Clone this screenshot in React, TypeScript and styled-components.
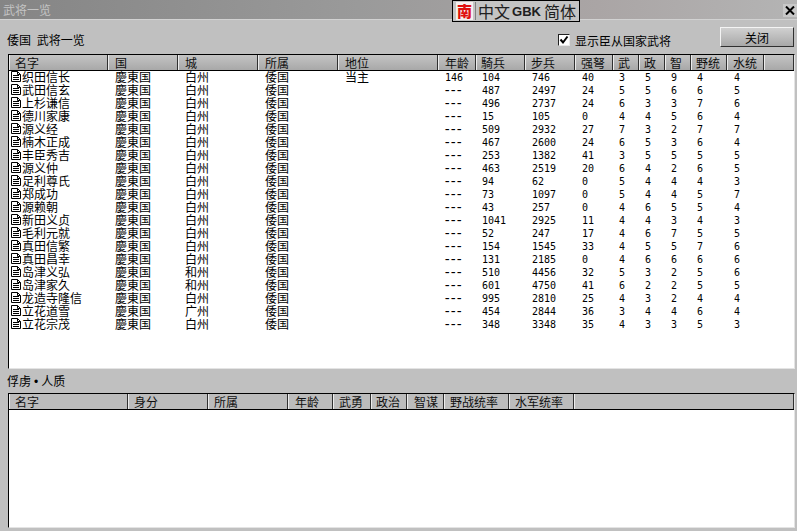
import React from 'react';
import styled, { createGlobalStyle } from 'styled-components';

const GlobalStyle = createGlobalStyle`
  html, body {
    margin: 0;
    padding: 0;
    background: #c0c0c0;
  }
`;

const CJK = `"Noto Sans CJK SC", "Noto Sans CJK JP", sans-serif`;

/*--- WINDOW ---*/

const Window = styled.div`
  position: relative;
  width: 797px;
  height: 531px;
  overflow: hidden;
  display: flex;
  flex-direction: column;
  box-sizing: border-box;
  padding-bottom: 3px;
  background: #c0c0c0;
  font-family: ${CJK};
  font-size: 12px;
  color: #000;
`;

const TitleBar = styled.div`
  height: 19px;
  flex: none;
  display: flex;
  align-items: center;
  justify-content: space-between;
  padding: 0 0 0 3px;
  background: linear-gradient(90deg, #858585, #9a9a9a 45%, #aaa5a5 75%, #b4b4b4);
  border-bottom: 1px solid #d2d2d2;
  color: #c4c4c4;
`;

const CloseButton = styled.div`
  width: 14px;
  height: 13px;
  margin-top: 1px;
  display: flex;
  align-items: center;
  justify-content: center;
  background: #c8c8c8;
`;

/*--- FLOATING IME BAR ---*/

const ImeBar = styled.div`
  position: absolute;
  left: 452px;
  top: 0;
  width: 128px;
  height: 22px;
  box-sizing: border-box;
  display: flex;
  align-items: center;
  padding-left: 3px;
  border: 1px solid #000;
  background: #c4c4c4;
  color: #202020;
`;

const ImeLogo = styled.div`
  width: 17px;
  height: 18px;
  margin-right: 5px;
  display: flex;
  align-items: center;
  justify-content: center;
  background: #f4f0f0;
  color: #e01010;
  font-weight: 900;
  font-size: 15px;
  line-height: 18px;
  box-shadow: 2px 0 0 #c4c4c4, 3px 0 0 #808080;
`;

const ImeText = styled.span`
  font-size: 16px;
  line-height: 20px;
  white-space: nowrap;
`;

const ImeLatin = styled.span`
  margin: 0 3px 0 2px;
  font-family: "Liberation Sans", sans-serif;
  font-size: 13px;
  font-weight: 700;
`;

/*--- TOOLBAR ---*/

const Toolbar = styled.div`
  height: 34px;
  flex: none;
  display: flex;
  align-items: center;
  padding: 6px 3px 0 7px;
  box-sizing: border-box;
`;

const Caption = styled.div`
  flex: 1;
  word-spacing: 3px;
  line-height: 14px;
`;

const CheckLabel = styled.label`
  display: flex;
  align-items: center;
  gap: 5px;
  margin-right: 49px;
`;

const CheckBox = styled.span`
  width: 12px;
  height: 12px;
  margin-top: -1px;
  box-sizing: border-box;
  display: flex;
  align-items: center;
  justify-content: center;
  background: #fff;
  border: 1px solid;
  border-color: #202020 #e8e8e8 #e8e8e8 #202020;
`;

const CloseAction = styled.button`
  width: 74px;
  height: 20px;
  padding: 0;
  margin-top: -6px;
  font: inherit;
  color: #000;
  background: linear-gradient(#d0d0d0, #a8a8a8);
  border: 1px solid;
  border-color: #f4f4f4 #303030 #303030 #f4f4f4;
`;

/*--- LISTS ---*/

const ListBox = styled.div<{ $height: number }>`
  height: ${(p) => p.$height}px;
  flex: none;
  margin: 0 2px 0 8px;
  box-sizing: border-box;
  overflow: hidden;
  background: #fff;
  border: 1px solid;
  border-color: #000 #e4e4e4 #e4e4e4 #000;
`;

const HeaderRow = styled.div<{ $flat?: boolean }>`
  height: 16px;
  box-sizing: border-box;
  display: flex;
  border-bottom: 1px solid #000;
  background: ${(p) => (p.$flat ? '#bcbcbc' : 'linear-gradient(#c4c4c4, #a8a8a8)')};
`;

const HeaderCell = styled.div<{ $w?: number; $pad: number }>`
  width: ${(p) => (p.$w ? `${p.$w}px` : 'auto')};
  flex: ${(p) => (p.$w ? 'none' : '1')};
  box-sizing: border-box;
  padding-left: ${(p) => p.$pad}px;
  line-height: 15px;
  white-space: nowrap;
  color: #101010;
  border-left: 1px solid #ececec;
  border-right: 1px solid #303030;
`;

const Row = styled.div`
  height: 13px;
  display: flex;
`;

const Cell = styled.div<{ $w: number; $pad: number; $num?: boolean }>`
  width: ${(p) => p.$w}px;
  height: 13px;
  flex: none;
  box-sizing: border-box;
  padding-left: ${(p) => p.$pad}px;
  display: flex;
  align-items: center;
  gap: 1px;
  white-space: nowrap;
  line-height: ${(p) => (p.$num ? '13px' : '11px')};
  padding-bottom: ${(p) => (p.$num ? '0' : '2px')};
  font-size: ${(p) => (p.$num ? '10px' : '12px')};
  font-family: ${(p) => (p.$num ? `"DejaVu Sans Mono", monospace` : CJK)};
`;

const Dash = styled.span`
  margin-left: -2px;
  font-size: 14px;
  letter-spacing: -2.4px;
`;

const SectionLabel = styled.div`
  height: 24px;
  flex: none;
  box-sizing: border-box;
  padding: 5px 0 0 7px;
  line-height: 14px;
`;

const Bullet = styled.span`
  margin: 0 3px;
  font-family: "Liberation Sans", sans-serif;
`;

const DocIcon: React.FC = () => (
  <svg width="10" height="11" viewBox="0 0 10 11" fill="none" stroke="#000" strokeWidth="1">
    <path d="M0.5 0.5H6.5L9.5 3.5V10.5H0.5Z" fill="#fff" />
    <path d="M2 4.5H8M2 6.5H8M2 8.5H8M6.5 0.5V3.5H9.5" />
  </svg>
);

const columns = [
  { title: '名字', w: 99, head: 5, cell: 2 },
  { title: '国', w: 70, head: 6, cell: 7 },
  { title: '城', w: 80, head: 6, cell: 7 },
  { title: '所属', w: 80, head: 6, cell: 7 },
  { title: '地位', w: 100, head: 6, cell: 7 },
  { title: '年龄', w: 38, head: 6, cell: 7 },
  { title: '騎兵', w: 49, head: 4, cell: 6 },
  { title: '步兵', w: 50, head: 5, cell: 7 },
  { title: '强弩', w: 38, head: 5, cell: 7 },
  { title: '武', w: 26, head: 4, cell: 6 },
  { title: '政', w: 26, head: 4, cell: 6 },
  { title: '智', w: 26, head: 4, cell: 6 },
  { title: '野统', w: 36, head: 4, cell: 6 },
  { title: '水统', w: 37, head: 5, cell: 7 },
];

const captiveColumns = [
  { title: '名字', w: 119, head: 5 },
  { title: '身分', w: 80, head: 5 },
  { title: '所属', w: 80, head: 5 },
  { title: '年龄', w: 45, head: 6 },
  { title: '武勇', w: 38, head: 5 },
  { title: '政治', w: 36, head: 4 },
  { title: '智谋', w: 37, head: 6 },
  { title: '野战统率', w: 65, head: 5 },
  { title: '水军统率', w: 65, head: 5 },
];

type General = [string, string, string, string, number, number, number, number, number, number, number, number];

const generals: General[] = [
  ['织田信长', '白州', '146', '当主', 104, 746, 40, 3, 5, 9, 4, 4],
  ['武田信玄', '白州', '---', '', 487, 2497, 24, 5, 5, 6, 6, 5],
  ['上杉谦信', '白州', '---', '', 496, 2737, 24, 6, 3, 3, 7, 6],
  ['德川家康', '白州', '---', '', 15, 105, 0, 4, 4, 5, 6, 4],
  ['源义经', '白州', '---', '', 509, 2932, 27, 7, 3, 2, 7, 7],
  ['楠木正成', '白州', '---', '', 467, 2600, 24, 6, 5, 3, 6, 4],
  ['丰臣秀吉', '白州', '---', '', 253, 1382, 41, 3, 5, 5, 5, 5],
  ['源义仲', '白州', '---', '', 463, 2519, 20, 6, 4, 2, 6, 5],
  ['足利尊氏', '白州', '---', '', 94, 62, 0, 5, 4, 4, 4, 3],
  ['郑成功', '白州', '---', '', 73, 1097, 0, 5, 4, 4, 5, 7],
  ['源赖朝', '白州', '---', '', 43, 257, 0, 4, 6, 5, 5, 4],
  ['新田义贞', '白州', '---', '', 1041, 2925, 11, 4, 4, 3, 4, 3],
  ['毛利元就', '白州', '---', '', 52, 247, 17, 4, 6, 7, 5, 5],
  ['真田信繁', '白州', '---', '', 154, 1545, 33, 4, 5, 5, 7, 6],
  ['真田昌幸', '白州', '---', '', 131, 2185, 0, 4, 6, 6, 6, 6],
  ['岛津义弘', '和州', '---', '', 510, 4456, 32, 5, 3, 2, 5, 6],
  ['岛津家久', '和州', '---', '', 601, 4750, 41, 6, 2, 2, 5, 5],
  ['龙造寺隆信', '白州', '---', '', 995, 2810, 25, 4, 3, 2, 4, 4],
  ['立花道雪', '广州', '---', '', 454, 2844, 36, 3, 4, 4, 6, 4],
  ['立花宗茂', '白州', '---', '', 348, 3348, 35, 4, 3, 3, 5, 3],
];

const GeneralRow: React.FC<{ general: General }> = ({ general }) => {
  const [name, city, age, rank, ...stats] = general;
  const values: React.ReactNode[] = [
    name,
    '慶東国',
    city,
    '倭国',
    rank,
    age === '---' ? <Dash>---</Dash> : age,
    ...stats,
  ];
  return (
    <Row>
      {columns.map((col, i) => (
        <Cell key={col.title} $w={col.w} $pad={col.cell} $num={i >= 5}>
          {i === 0 && <DocIcon />}
          {values[i]}
        </Cell>
      ))}
    </Row>
  );
};

export default function App() {
  return (
    <Window>
      <GlobalStyle />
      <TitleBar>
        <span>武将一览</span>
        <CloseButton>
          <svg width="10" height="9" viewBox="0 0 10 9" stroke="#000" strokeWidth="2">
            <path d="M1 0.5L9 8.5M9 0.5L1 8.5" />
          </svg>
        </CloseButton>
      </TitleBar>
      <ImeBar>
        <ImeLogo>南</ImeLogo>
        <ImeText>中文</ImeText>
        <ImeLatin>GBK</ImeLatin>
        <ImeText>简体</ImeText>
      </ImeBar>
      <Toolbar>
        <Caption>倭国 武将一览</Caption>
        <CheckLabel>
          <CheckBox>
            <svg width="10" height="10" viewBox="0 0 10 10" fill="none" stroke="#000" strokeWidth="2">
              <path d="M1.5 4.5L4 7.5L8.5 1.5" />
            </svg>
          </CheckBox>
          显示臣从国家武将
        </CheckLabel>
        <CloseAction>关闭</CloseAction>
      </Toolbar>
      <ListBox $height={315}>
        <HeaderRow>
          {columns.map((col) => (
            <HeaderCell key={col.title} $w={col.w} $pad={col.head}>
              {col.title}
            </HeaderCell>
          ))}
          <HeaderCell $pad={0} />
        </HeaderRow>
        {generals.map((g) => (
          <GeneralRow key={g[0]} general={g} />
        ))}
      </ListBox>
      <SectionLabel>
        俘虏<Bullet>•</Bullet>人质
      </SectionLabel>
      <ListBox $height={135}>
        <HeaderRow $flat>
          {captiveColumns.map((col) => (
            <HeaderCell key={col.title} $w={col.w} $pad={col.head}>
              {col.title}
            </HeaderCell>
          ))}
          <HeaderCell $pad={0} />
        </HeaderRow>
      </ListBox>
    </Window>
  );
}
